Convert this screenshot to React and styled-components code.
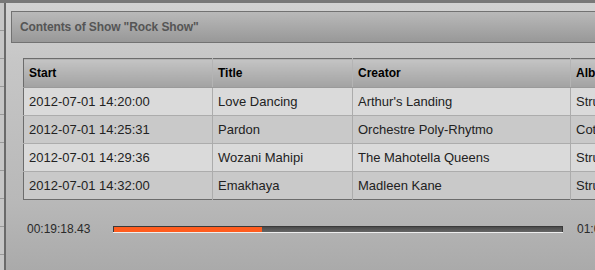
import React from "react";
import styled, { createGlobalStyle } from "styled-components";

const Global = createGlobalStyle`
  html, body { margin: 0; padding: 0; background: #b8b8b8; }
  body { font-family: "Liberation Sans", Arial, sans-serif; }
`;

const Screen = styled.div`
  width: 595px;
  height: 270px;
  overflow: hidden;
  display: flex;
  flex-direction: column;
  background: #c2c2c2;
`;

const TopEdge = styled.div`
  height: 3px;
  flex: none;
  background: #787878;
`;

const Body = styled.div`
  flex: 1;
  display: flex;
  min-height: 0;
`;

const BackStrip = styled.div`
  width: 4px;
  flex: none;
  background: repeating-linear-gradient(
    to bottom,
    #c6c6c6 0px,
    #c6c6c6 27px,
    #9a9a9a 27px,
    #9a9a9a 28px
  );
`;

const Dialog = styled.div`
  flex: 1;
  border-left: 2px solid #6a6a6a;
  background: linear-gradient(to bottom, #d2d2d2 0px, #c6c6c6 60px, #b8b8b8 200px, #aaaaaa 267px);
  padding: 8px 0 0 5px;
  display: flex;
  flex-direction: column;
  min-width: 0;
  overflow: hidden;
`;

const TitleBar = styled.div`
  width: 640px;
  height: 30px;
  flex: none;
  border: 1px solid #727272;
  background: linear-gradient(to bottom, #b9b9b9, #989898);
  display: flex;
  align-items: center;
  padding-left: 8px;
  box-sizing: content-box;
`;

const TitleText = styled.span`
  font-weight: bold;
  font-size: 12px;
  letter-spacing: -0.1px;
  color: #555555;
`;

const Content = styled.div`
  padding: 15px 0 0 12px;
  display: flex;
  flex-direction: column;
`;

const Table = styled.table`
  border-collapse: collapse;
  table-layout: fixed;
  width: 700px;
  border: 1px solid #6c6c6c;
  font-size: 13px;
`;

const HeadCell = styled.th`
  height: 28px;
  padding: 0 0 0 5px;
  text-align: left;
  font-weight: bold;
  font-size: 12px;
  color: #000;
  background: linear-gradient(to bottom, #c4c4c4, #a2a2a2);
  border-left: 1px solid #b4b4b4;
  border-bottom: 1px solid #9a9a9a;
  &:first-child { border-left: none; }
`;

const Row = styled.tr`
  background: ${(p) => (p.$alt ? "#c9c9c9" : "#dadada")};
`;

const Cell = styled.td`
  height: 27px;
  padding: 0 0 0 5px;
  color: #222;
  white-space: nowrap;
  overflow: hidden;
  border-left: 1px solid #acacac;
  border-top: 1px solid #acacac;
  &:first-child { border-left: none; }
`;

const Player = styled.div`
  display: flex;
  align-items: center;
  margin-top: 22px;
  padding-left: 4px;
  width: 620px;
`;

const Time = styled.span`
  width: 86px;
  flex: none;
  font-size: 12px;
  color: #2a2a2a;
`;

const Track = styled.div`
  width: 448px;
  height: 5px;
  flex: none;
  border: 1px solid #3a3a3a;
  border-bottom: none;
  box-shadow: 0 1px 0 #eeeeee;
  background: linear-gradient(to bottom, #4a4a4a, #666666);
  display: flex;
`;

const Fill = styled.div`
  height: 100%;
  background: #ff5c1e;
`;

const EndTime = styled(Time)`
  margin-left: 14px;
`;

const rows = [
  ["2012-07-01 14:20:00", "Love Dancing", "Arthur's Landing", "Strut"],
  ["2012-07-01 14:25:31", "Pardon", "Orchestre Poly-Rhytmo", "Cotonou"],
  ["2012-07-01 14:29:36", "Wozani Mahipi", "The Mahotella Queens", "Strut"],
  ["2012-07-01 14:32:00", "Emakhaya", "Madleen Kane", "Strut"],
];

export default function App() {
  const progress = 0.33;
  return (
    <>
      <Global />
      <Screen>
        <TopEdge />
        <Body>
          <BackStrip />
          <Dialog>
            <TitleBar>
              <TitleText>Contents of Show "Rock Show"</TitleText>
            </TitleBar>
            <Content>
              <Table>
                <colgroup>
                  <col style={{ width: 189 }} />
                  <col style={{ width: 140 }} />
                  <col style={{ width: 218 }} />
                  <col />
                </colgroup>
                <thead>
                  <tr>
                    <HeadCell>Start</HeadCell>
                    <HeadCell>Title</HeadCell>
                    <HeadCell>Creator</HeadCell>
                    <HeadCell>Album</HeadCell>
                  </tr>
                </thead>
                <tbody>
                  {rows.map((r, i) => (
                    <Row key={i} $alt={i % 2 === 1}>
                      {r.map((c, j) => (
                        <Cell key={j}>{c}</Cell>
                      ))}
                    </Row>
                  ))}
                </tbody>
              </Table>
              <Player>
                <Time>00:19:18.43</Time>
                <Track>
                  <Fill style={{ width: `${progress * 100}%` }} />
                </Track>
                <EndTime>01:00:00.00</EndTime>
              </Player>
            </Content>
          </Dialog>
        </Body>
      </Screen>
    </>
  );
}
